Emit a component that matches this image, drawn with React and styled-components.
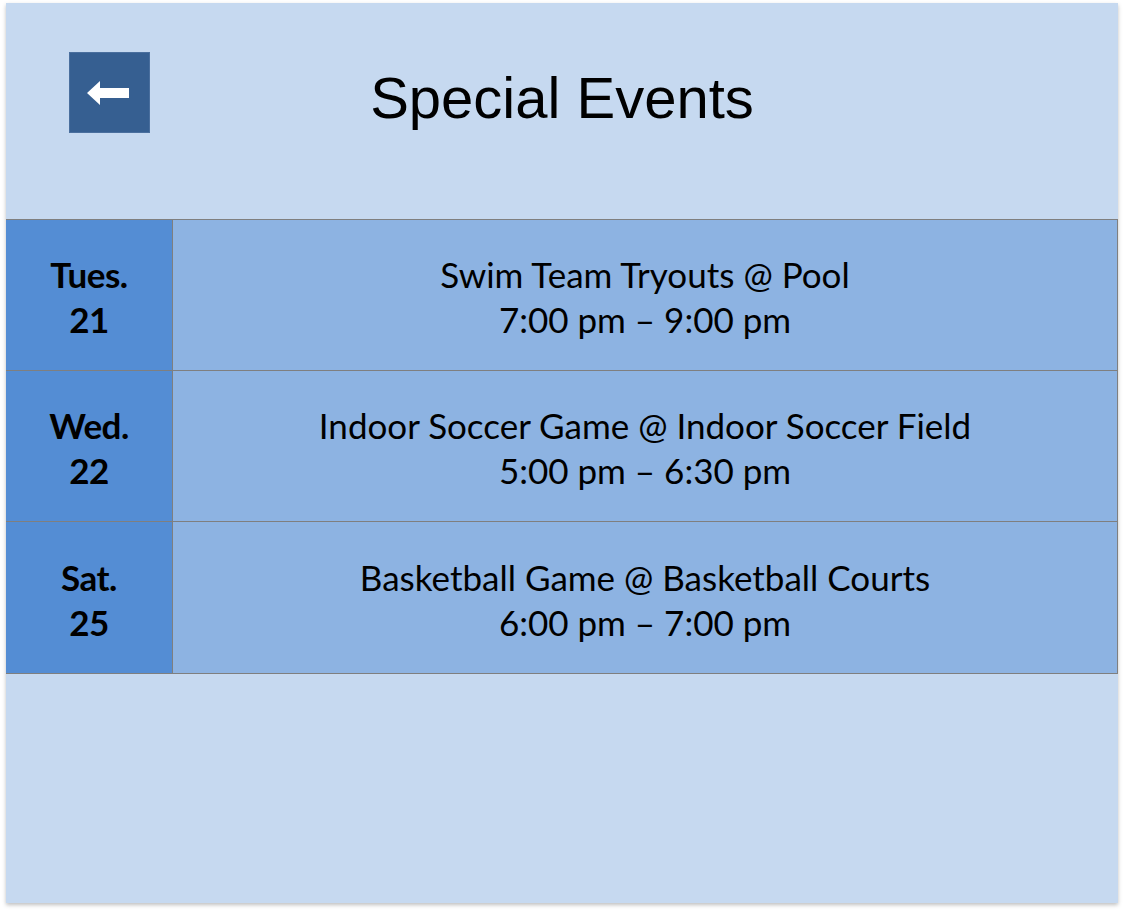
import React from "react";
import styled, { createGlobalStyle } from "styled-components";

const GlobalStyle = createGlobalStyle`
  html, body {
    margin: 0;
    padding: 0;
    background: #ffffff;
  }
  body {
    font-family: "Liberation Sans", Arial, sans-serif;
  }
`;

const events = [
  { day: "Tues.", date: "21", title: "Swim Team Tryouts @ Pool", time: "7:00 pm – 9:00 pm" },
  { day: "Wed.", date: "22", title: "Indoor Soccer Game @ Indoor Soccer Field", time: "5:00 pm – 6:30 pm" },
  { day: "Sat.", date: "25", title: "Basketball Game @ Basketball Courts", time: "6:00 pm – 7:00 pm" },
];

const BackArrow = () => (
  <svg width="42" height="24" viewBox="0 0 42 24">
    <path d="M0 12 L13 0 L13 7 L42 7 L42 17 L13 17 L13 24 Z" fill="#ffffff" />
  </svg>
);

const App = () => {
  return (
    <>
      <GlobalStyle />
      <Page>
        <Panel>
          <Header>
            <BackButton aria-label="Back">
              <BackArrow />
            </BackButton>
            <Title>Special Events</Title>
            <span />
          </Header>
          <Table>
            {events.map((ev, index) => (
              <Row key={ev.date} last={index === events.length - 1}>
                <DateCell>
                  <span>{ev.day}</span>
                  <span>{ev.date}</span>
                </DateCell>
                <EventCell>
                  <span>{ev.title}</span>
                  <span>{ev.time}</span>
                </EventCell>
              </Row>
            ))}
          </Table>
        </Panel>
      </Page>
    </>
  );
};

export default App;

const Page = styled.div`
  width: 1125px;
  height: 914px;
  padding: 3px 0 0 6px;
  box-sizing: border-box;
`;

const Panel = styled.div`
  width: 1112px;
  height: 900px;
  background: #c6d9f0;
  box-shadow: 0 2px 4px rgba(0, 0, 0, 0.25);
  display: flex;
  flex-direction: column;
`;

const Header = styled.div`
  height: 216px;
  box-sizing: border-box;
  padding: 49px 0 0 63px;
  display: grid;
  grid-template-columns: 1fr auto 1fr;
  align-items: start;
`;

const BackButton = styled.button`
  width: 81px;
  height: 81px;
  border: 1px solid #4a6f9e;
  background: #365f91;
  display: flex;
  align-items: center;
  justify-content: center;
  padding: 0 4px 0 0;
  cursor: pointer;
  justify-self: start;
`;

const Title = styled.h1`
  margin: 13px 0 0 -63px;
  font-family: "Liberation Sans", Arial, sans-serif;
  font-weight: 400;
  font-size: 58px;
  line-height: 66px;
  color: #000000;
`;

const Table = styled.div`
  border-top: 1px solid #7f7f7f;
  border-bottom: 1px solid #7f7f7f;
  display: flex;
  flex-direction: column;
`;

const Row = styled.div.withConfig({
  shouldForwardProp: (prop) => !["last"].includes(prop),
})`
  display: grid;
  grid-template-columns: 167px 1fr;
  height: 151px;
  box-sizing: border-box;
  border-bottom: ${({ last }) => (last ? "none" : "1px solid #7f7f7f")};
  font-family: Lato, "Open Sans", sans-serif;
  color: #000000;
`;

const DateCell = styled.div`
  background: #548dd4;
  border-right: 1px solid #7f7f7f;
  display: flex;
  flex-direction: column;
  align-items: center;
  justify-content: center;
  font-weight: 700;
  font-size: 35px;
  line-height: 45px;
  letter-spacing: -0.5px;
  padding-top: 4px;
`;

const EventCell = styled.div`
  background: #8db3e2;
  border-right: 1px solid #7f7f7f;
  display: flex;
  flex-direction: column;
  align-items: center;
  justify-content: center;
  font-size: 35px;
  line-height: 45px;
  padding-top: 4px;
`;
